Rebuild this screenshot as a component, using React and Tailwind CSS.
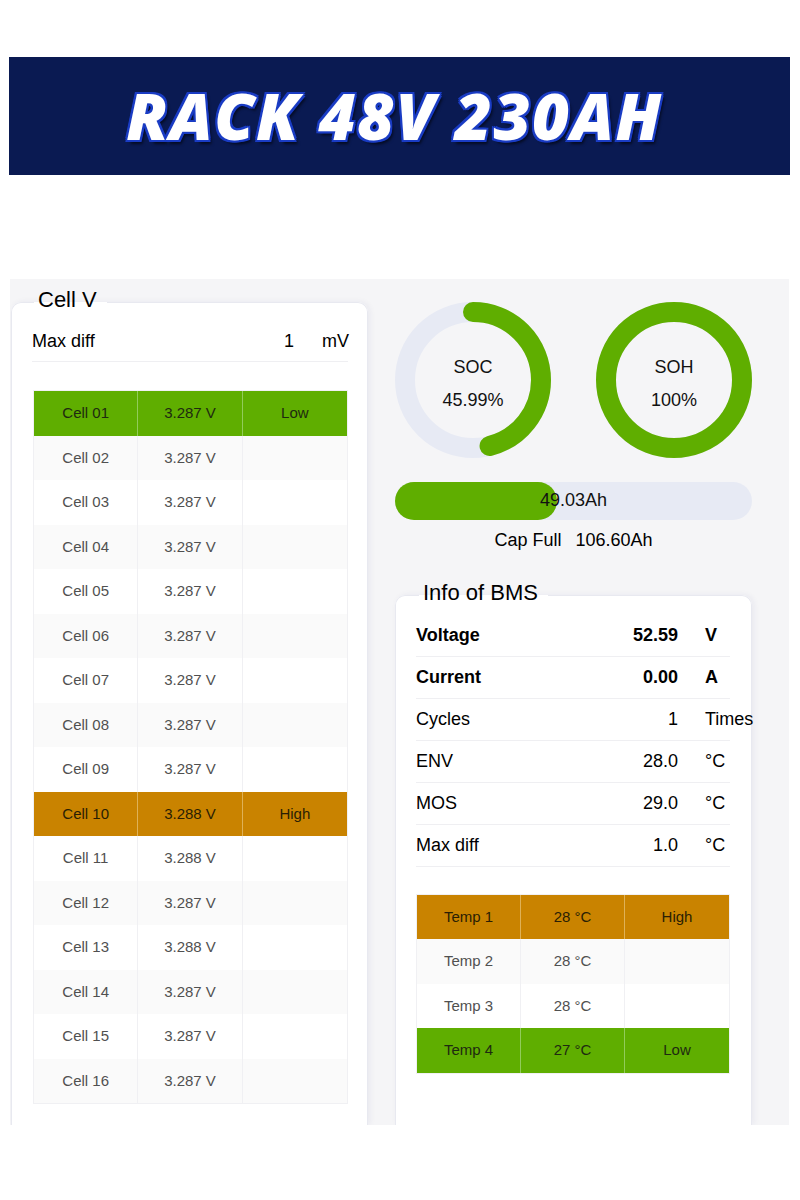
import React from "react";

const GREEN = "#5fae00";

const cells = [
  { name: "Cell 01", v: "3.287 V", status: "Low" },
  { name: "Cell 02", v: "3.287 V" },
  { name: "Cell 03", v: "3.287 V" },
  { name: "Cell 04", v: "3.287 V" },
  { name: "Cell 05", v: "3.287 V" },
  { name: "Cell 06", v: "3.287 V" },
  { name: "Cell 07", v: "3.287 V" },
  { name: "Cell 08", v: "3.287 V" },
  { name: "Cell 09", v: "3.287 V" },
  { name: "Cell 10", v: "3.288 V", status: "High" },
  { name: "Cell 11", v: "3.288 V" },
  { name: "Cell 12", v: "3.287 V" },
  { name: "Cell 13", v: "3.288 V" },
  { name: "Cell 14", v: "3.287 V" },
  { name: "Cell 15", v: "3.287 V" },
  { name: "Cell 16", v: "3.287 V" },
];

const temps = [
  { name: "Temp 1", v: "28 °C", status: "High" },
  { name: "Temp 2", v: "28 °C" },
  { name: "Temp 3", v: "28 °C" },
  { name: "Temp 4", v: "27 °C", status: "Low" },
];

const info = [
  { label: "Voltage", value: "52.59", unit: "V", bold: true },
  { label: "Current", value: "0.00", unit: "A", bold: true },
  { label: "Cycles", value: "1", unit: "Times" },
  { label: "ENV", value: "28.0", unit: "°C" },
  { label: "MOS", value: "29.0", unit: "°C" },
  { label: "Max diff", value: "1.0", unit: "°C" },
];

function DataTable({ rows }) {
  return (
    <div className="border border-[#f0f0f3] text-[15px]">
      {rows.map((r, i) => {
        let bg = i % 2 ? "bg-[#fafafa] text-[#505050]" : "bg-white text-[#505050]";
        let line = "border-[#f0f0f3]";
        if (r.status === "Low") {
          bg = "bg-[#5fae00] text-[#1e2a10]";
          line = "border-[#92cc5a]";
        } else if (r.status === "High") {
          bg = "bg-[#c98300] text-[#2a1e04]";
          line = "border-[#dfb157]";
        }
        return (
          <div key={r.name} className={`grid grid-cols-3 h-[44.5px] ${bg}`}>
            <div className={`flex items-center justify-center border-r ${line}`}>{r.name}</div>
            <div className={`flex items-center justify-center border-r ${line}`}>{r.v}</div>
            <div className="flex items-center justify-center">{r.status || ""}</div>
          </div>
        );
      })}
    </div>
  );
}

function Ring({ value, label, text }) {
  const size = 156;
  const stroke = 20;
  const r = (size - stroke) / 2;
  const c = 2 * Math.PI * r;
  return (
    <div className="relative w-[156px] h-[156px]">
      <svg width={size} height={size} viewBox={`0 0 ${size} ${size}`}>
        <circle cx={size / 2} cy={size / 2} r={r} fill="none" stroke="#e7eaf4" strokeWidth={stroke} />
        <circle
          cx={size / 2}
          cy={size / 2}
          r={r}
          fill="none"
          stroke={GREEN}
          strokeWidth={stroke}
          strokeLinecap="round"
          strokeDasharray={`${(c * value) / 100} ${c}`}
          transform={`rotate(-90 ${size / 2} ${size / 2})`}
        />
      </svg>
      <div className="absolute inset-0 flex flex-col items-center justify-center pt-[8px] gap-[12px] text-[18px] leading-[21px] text-[#111]">
        <span>{label}</span>
        <span>{text}</span>
      </div>
    </div>
  );
}

export default function App() {
  const soc = 45.3;
  return (
    <div className="w-[800px] h-[1200px] bg-white font-['Liberation_Sans',Arial,sans-serif]">
      <div className="h-[57px]" />
      <div className="ml-[9px] w-[781px] h-[118px] bg-[#0a1a52] flex items-center justify-center">
        <span className="font-['Open_Sans','DejaVu_Sans',sans-serif] italic font-extrabold text-[64px] leading-none tracking-[1.5px] text-white pr-[10px] [text-shadow:2px_0_0_#1a3cc4,-2px_0_0_#1a3cc4,0_2px_0_#1a3cc4,0_-2px_0_#1a3cc4,2px_2px_0_#1a3cc4,-2px_-2px_0_#1a3cc4,2px_-2px_0_#1a3cc4,-2px_2px_0_#1a3cc4,3px_4px_3px_rgba(0,0,0,0.6)]">
          RACK 48V 230AH
        </span>
      </div>
      <div className="h-[104px]" />
      <div className="ml-[10px] w-[779px] h-[846px] bg-[#f5f5f7] overflow-hidden flex items-stretch pt-[8px]">
        {/* Left card */}
        <fieldset className="ml-[1px] w-[357px] shrink-0 bg-white border border-b-0 border-[#e8e9f0] rounded-t-[10px] pl-[20px] pr-[19px] shadow-[2px_0_6px_rgba(30,40,120,0.06)]">
          <legend className="ml-[2px] pl-[4px] pr-[10px] pb-[6px] text-[22px] leading-[25px] text-black">Cell V</legend>
          <div className="mt-[4px] h-[40px] flex items-center border-b border-[#efeff2] text-[18px] text-black">
            <span className="flex-1">Max diff</span>
            <span>1</span>
            <span className="w-[54px] pl-[28px] whitespace-nowrap">mV</span>
          </div>
          <div className="mt-[28px] ml-[1px]">
            <DataTable rows={cells} />
          </div>
        </fieldset>

        {/* Right column */}
        <div className="flex-1 flex flex-col pl-[27px] pr-[37px] pt-[15px]">
          <div className="flex justify-between">
            <Ring value={45.99} label="SOC" text="45.99%" />
            <Ring value={100} label="SOH" text="100%" />
          </div>
          <div className="relative mt-[23.5px] h-[38.5px] rounded-full bg-[#e7eaf4]">
            <div className="h-full rounded-full bg-[#5fae00]" style={{ width: `${soc}%` }} />
            <div className="absolute inset-0 flex items-center justify-center text-[18px] text-[#111]">49.03Ah</div>
          </div>
          <div className="mt-[10px] flex justify-center gap-[14px] text-[18px] leading-[21px] text-black">
            <span>Cap Full</span>
            <span>106.60Ah</span>
          </div>
          <fieldset className="mt-[28.5px] flex-1 bg-white border border-b-0 border-[#e8e9f0] rounded-t-[10px] pl-[20px] pr-[21px] shadow-[2px_0_6px_rgba(30,40,120,0.06)]">
            <legend className="ml-[3px] pl-[4px] pr-[10px] pb-[6px] text-[22px] leading-[25px] text-black">Info of BMS</legend>
            <div className="mt-[4px]">
              {info.map((r) => (
                <div key={r.label} className={`h-[42px] flex items-center border-b border-[#efeff2] text-[18px] text-black ${r.bold ? "font-bold" : ""}`}>
                  <span className="flex-1">{r.label}</span>
                  <span>{r.value}</span>
                  <span className="w-[52px] pl-[27px] whitespace-nowrap">{r.unit}</span>
                </div>
              ))}
            </div>
            <div className="mt-[27px]">
              <DataTable rows={temps} />
            </div>
          </fieldset>
        </div>
      </div>
    </div>
  );
}
